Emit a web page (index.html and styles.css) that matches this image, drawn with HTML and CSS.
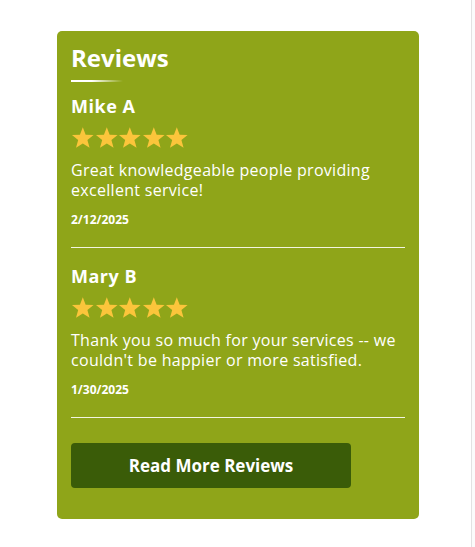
FILE: index.html
```html
<!DOCTYPE html>
<html lang="en">
<head>
  <meta charset="UTF-8" />
  <meta name="viewport" content="width=device-width, initial-scale=1.0" />
  <title>Reviews</title>
  <link rel="stylesheet" href="styles.css">
</head>
<body>
<div class="page">
  <section class="reviews">
    <h2>Reviews</h2>
    <div class="title-line"></div>

    <div class="review">
      <h3>Mike A</h3>
      <div class="stars">
        <svg viewBox="0 0 24 22"><path d="M12 0l2.9 7.6 8.1.4-6.3 5.1 2.2 7.9L12 16.6 5.1 21l2.2-7.9L1 8l8.1-.4z"/></svg>
        <svg viewBox="0 0 24 22"><path d="M12 0l2.9 7.6 8.1.4-6.3 5.1 2.2 7.9L12 16.6 5.1 21l2.2-7.9L1 8l8.1-.4z"/></svg>
        <svg viewBox="0 0 24 22"><path d="M12 0l2.9 7.6 8.1.4-6.3 5.1 2.2 7.9L12 16.6 5.1 21l2.2-7.9L1 8l8.1-.4z"/></svg>
        <svg viewBox="0 0 24 22"><path d="M12 0l2.9 7.6 8.1.4-6.3 5.1 2.2 7.9L12 16.6 5.1 21l2.2-7.9L1 8l8.1-.4z"/></svg>
        <svg viewBox="0 0 24 22"><path d="M12 0l2.9 7.6 8.1.4-6.3 5.1 2.2 7.9L12 16.6 5.1 21l2.2-7.9L1 8l8.1-.4z"/></svg>
      </div>
      <p class="text">Great knowledgeable people providing excellent service!</p>
      <p class="date">2/12/2025</p>
    </div>

    <div class="review">
      <h3>Mary B</h3>
      <div class="stars">
        <svg viewBox="0 0 24 22"><path d="M12 0l2.9 7.6 8.1.4-6.3 5.1 2.2 7.9L12 16.6 5.1 21l2.2-7.9L1 8l8.1-.4z"/></svg>
        <svg viewBox="0 0 24 22"><path d="M12 0l2.9 7.6 8.1.4-6.3 5.1 2.2 7.9L12 16.6 5.1 21l2.2-7.9L1 8l8.1-.4z"/></svg>
        <svg viewBox="0 0 24 22"><path d="M12 0l2.9 7.6 8.1.4-6.3 5.1 2.2 7.9L12 16.6 5.1 21l2.2-7.9L1 8l8.1-.4z"/></svg>
        <svg viewBox="0 0 24 22"><path d="M12 0l2.9 7.6 8.1.4-6.3 5.1 2.2 7.9L12 16.6 5.1 21l2.2-7.9L1 8l8.1-.4z"/></svg>
        <svg viewBox="0 0 24 22"><path d="M12 0l2.9 7.6 8.1.4-6.3 5.1 2.2 7.9L12 16.6 5.1 21l2.2-7.9L1 8l8.1-.4z"/></svg>
      </div>
      <p class="text">Thank you so much for your services -- we couldn't be happier or more satisfied.</p>
      <p class="date">1/30/2025</p>
    </div>

    <a class="more-btn" href="#">Read More Reviews</a>
  </section>
</div>
</body>
</html>
```

FILE: styles.css
```css
body {
  margin: 0;
  background-color: #fbfbfb;
  font-family: 'Open Sans', sans-serif;
}

.page {
  width: 472px;
  min-height: 547px;
  background-color: #fff;
  border-right: 1px solid #e2e2e2;
  padding-top: 31px;
  box-sizing: border-box;
}

.reviews {
  width: 362px;
  margin-left: 57px;
  box-sizing: border-box;
  padding: 12px 14px 31px 14px;
  background-color: #8fa519;
  border-radius: 5px;
  color: #fff;
}

.reviews h2 {
  margin: 0;
  font-size: 24px;
  font-weight: 700;
  line-height: 30px;
}

.title-line {
  width: 52px;
  height: 2px;
  margin-top: 7px;
  background: linear-gradient(to right, #fff 40%, rgba(255, 255, 255, 0));
}

.review {
  border-bottom: 1px solid #f2f5e0;
  padding-top: 12px;
  padding-bottom: 19px;
}

.review + .review {
  padding-top: 16px;
}

.review h3 {
  margin: 0;
  font-size: 18px;
  font-weight: 700;
  line-height: 24px;
  letter-spacing: 0.5px;
}

.stars {
  display: flex;
  margin-top: 9px;
  height: 22px;
}

.stars svg {
  width: 23.6px;
  height: 22px;
  fill: #fbc53b;
}

.text {
  margin: 11px 0 0;
  font-size: 16px;
  font-weight: 500;
  line-height: 20px;
  letter-spacing: 0.3px;
}

.date {
  margin: 12px 0 0;
  font-size: 12px;
  font-weight: 700;
  line-height: 16px;
}

.more-btn {
  display: flex;
  align-items: center;
  justify-content: center;
  width: 280px;
  height: 45px;
  margin-top: 25px;
  background-color: #3a5c08;
  border-radius: 4px;
  color: #fff;
  text-decoration: none;
  font-size: 17px;
  font-weight: 700;
}
```
